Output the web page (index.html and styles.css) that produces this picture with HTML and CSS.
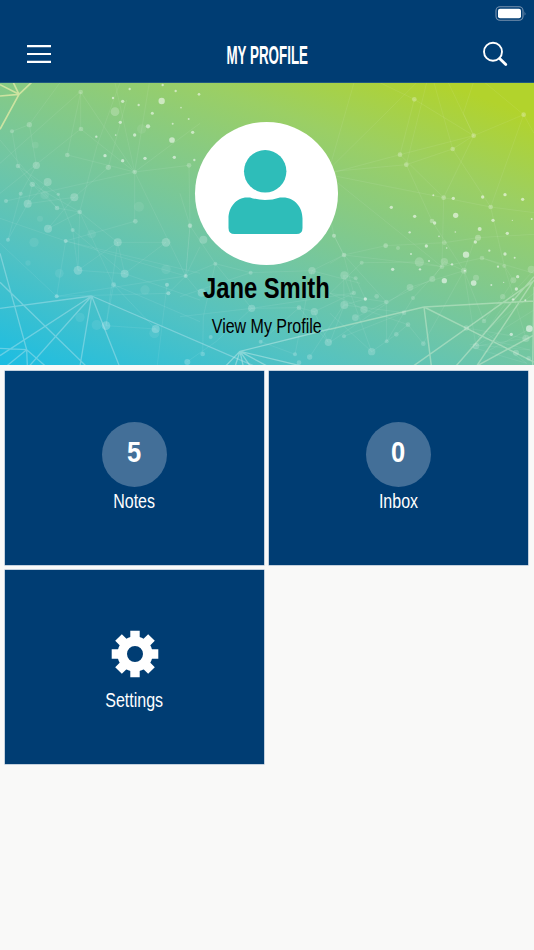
FILE: index.html
```html
<!DOCTYPE html>
<html lang="en">
<head>
    <meta charset="UTF-8">
    <title>My Profile</title>
    <link rel="stylesheet" href="styles.css">
</head>
<body>
    <header class="top_bar">
        <div class="status">
            <svg width="32" height="15" viewBox="0 0 32 15">
                <rect x="1" y=".8" width="27" height="13.4" rx="4" fill="none" stroke="#7893b0" stroke-width="1.1"/>
                <rect x="3" y="2.8" width="23" height="9.4" rx="2" fill="#fff"/>
                <path d="M29.6 5.2q1.6 2.3 0 4.6z" fill="#7893b0"/>
            </svg>
        </div>
        <nav class="nav">
            <svg width="26" height="26" viewBox="0 0 26 26" stroke="#fff" stroke-width="2.2">
                <path d="M1 5.2h24M1 13h24M1 20.8h24"/>
            </svg>
            <h1 class="title"><span>MY PROFILE</span></h1>
            <svg width="26" height="26" viewBox="0 0 26 26" fill="none" stroke="#fff">
                <circle cx="11" cy="10.8" r="9" stroke-width="1.9"/>
                <path d="M17.600 17.400l6.200 6.200" stroke-width="2.800" stroke-linecap="round"/>
            </svg>
        </nav>
    </header>

    <section class="hero">
        <svg class="network" width="534" height="282" viewBox="0 0 534 282">
            <!-- left side -->
            <g transform="translate(0 -3) scale(.33333)" stroke="#fff" fill="none">
                <path stroke-width="2.5" opacity=".09" d="M242 36L202 225L404 276L242 147V36L404 276L345 8M404 276L448 8M404 276L600 130M404 276L567 256L570 437L557 588L404 276V424L197 483L170 649L0 490M88 134L36 154L54 258L97 313L83 371L24 479L62 340L109 256L88 134L180 8M0 340L242 147M18 363L404 276M143 306L83 371L223 352L144 446L239 396L171 384L97 313L239 396L234 571L374 581L218 450L175 343L54 258M353 487L498 487L374 581L353 487L234 571L218 450M353 487L239 396L341 614L600 725M341 614L318 737L353 487M374 581L600 660M0 415L197 483L557 588L170 649L505 640L557 588L600 500M501 614L472 855M341 614L467 747L318 737M0 180L171 384M325 262L223 352M325 262L380 60M239 396L290 200L360 8M197 483L600 580M0 250L240 36M557 588L600 640"/>
                <g stroke="#d9e7a4" stroke-width="5" opacity=".85"><path d="M57 43L0 14M57 43L0 48M57 43L40 8M57 43L94 8M57 43L0 148"/></g>
                <g stroke="#b6e4ee" stroke-width="4" opacity=".45">
                    <path d="M0 520L80 809L136 858M80 809L20 858M80 809L82 858M80 809L0 805M275 648L0 685M275 648L0 827M275 648L88 858M275 648L240 858M275 648L358 858M275 648L765 859M0 607L258 858"/>
                </g>
                <g fill="#fff" stroke="none" opacity=".22">
                    <circle cx="345" cy="95" r="13"/><circle cx="242" cy="36" r="7"/><circle cx="243" cy="147" r="7"/><circle cx="88" cy="134" r="8"/><circle cx="36" cy="154" r="6"/><circle cx="202" cy="225" r="7"/><circle cx="109" cy="256" r="11"/><circle cx="54" cy="258" r="7"/><circle cx="143" cy="306" r="12"/><circle cx="97" cy="313" r="8"/><circle cx="62" cy="341" r="6"/><circle cx="18" cy="363" r="6"/><circle cx="83" cy="371" r="12"/><circle cx="223" cy="352" r="12"/><circle cx="175" cy="343" r="5"/><circle cx="171" cy="384" r="7"/><circle cx="239" cy="396" r="7"/><circle cx="144" cy="446" r="12"/><circle cx="218" cy="450" r="6"/><circle cx="325" cy="262" r="8"/><circle cx="404" cy="276" r="7"/><circle cx="567" cy="256" r="7"/><circle cx="406" cy="424" r="7"/><circle cx="570" cy="437" r="7"/><circle cx="24" cy="479" r="6"/><circle cx="353" cy="487" r="12"/><circle cx="498" cy="487" r="13"/><circle cx="234" cy="571" r="13"/><circle cx="374" cy="581" r="12"/><circle cx="341" cy="614" r="7"/><circle cx="318" cy="737" r="13"/><circle cx="467" cy="747" r="12"/><circle cx="562" cy="846" r="9"/>
                </g>
                <g fill="#fff" stroke="none" opacity=".07">
                    <circle cx="425" cy="147" r="14"/><circle cx="106" cy="195" r="10"/><circle cx="417" cy="380" r="15"/><circle cx="134" cy="345" r="13"/><circle cx="102" cy="487" r="14"/><circle cx="120" cy="416" r="9"/><circle cx="275" cy="462" r="13"/><circle cx="178" cy="580" r="13"/><circle cx="84" cy="549" r="8"/><circle cx="240" cy="712" r="14"/><circle cx="290" cy="735" r="15"/><circle cx="435" cy="630" r="14"/><circle cx="463" cy="760" r="15"/><circle cx="498" cy="568" r="14"/>
                </g>
                <g fill="#fff" stroke="none" opacity=".3">
                    <circle cx="197" cy="483" r="6"/><circle cx="170" cy="649" r="6"/><circle cx="557" cy="588" r="6"/><circle cx="501" cy="614" r="6"/><circle cx="505" cy="640" r="6"/>
                </g>
                <g fill="#fff" stroke="none" opacity=".55">
                    <circle cx="389" cy="27" r="3.5"/><circle cx="488" cy="15" r="3.5"/><circle cx="527" cy="33" r="3.5"/><circle cx="339" cy="54" r="3.5"/><circle cx="368" cy="64" r="5"/><circle cx="416" cy="75" r="3.5"/><circle cx="485" cy="63" r="9.5"/><circle cx="543" cy="83" r="2.5"/><circle cx="457" cy="100" r="4.5"/><circle cx="361" cy="127" r="5"/><circle cx="444" cy="139" r="6.5"/><circle cx="518" cy="131" r="3"/><circle cx="566" cy="117" r="3"/><circle cx="404" cy="165" r="5"/><circle cx="347" cy="165" r="2.5"/><circle cx="289" cy="170" r="3.5"/><circle cx="516" cy="180" r="8.5"/><circle cx="578" cy="157" r="5"/><circle cx="315" cy="227" r="5"/><circle cx="368" cy="242" r="5"/><circle cx="435" cy="235" r="5"/><circle cx="523" cy="232" r="5"/><circle cx="583" cy="240" r="3.5"/><circle cx="597" cy="43" r="4"/>
                </g>
            </g>

            <!-- middle, below the avatar -->
            <g transform="translate(180 27) scale(.33333)" stroke="#fff" fill="none">
                <path stroke-width="2.5" opacity=".09" d="M17 498L106 461L212 488L396 482L491 435L462 377M17 498L30 347L106 461L215 595L357 593L403 605L521 549L491 435M106 461L70 620L68 732M215 595L109 694L22 755M396 482L345 733L242 695L357 593L445 697L403 605M212 488L0 560M0 620L215 595L521 549M396 482L540 520M491 496L492 584L389 741M30 347L0 250"/>
                <g stroke="#c3ece9" stroke-width="4" opacity=".5"><path d="M180 724L135 770M180 724L165 770M180 724L190 770M180 724L212 770M180 724L265 770M180 724L365 768M180 724L450 657"/></g>
                <g fill="#fff" stroke="none" opacity=".2">
                    <circle cx="70" cy="389" r="12"/><circle cx="30" cy="347" r="6"/><circle cx="106" cy="461" r="6"/><circle cx="212" cy="488" r="6"/><circle cx="462" cy="377" r="6"/><circle cx="396" cy="482" r="11"/><circle cx="65" cy="548" r="12"/><circle cx="215" cy="595" r="11"/><circle cx="357" cy="593" r="7"/><circle cx="403" cy="605" r="11"/><circle cx="92" cy="681" r="6"/><circle cx="242" cy="695" r="6"/><circle cx="445" cy="697" r="11"/><circle cx="68" cy="732" r="7"/><circle cx="389" cy="741" r="8"/><circle cx="345" cy="733" r="6"/><circle cx="357" cy="758" r="7"/>
                </g>
            </g>

            <!-- right side -->
            <g transform="translate(330 -3) scale(.33333)" stroke="#fff" fill="none">
                <path stroke-width="2.5" opacity=".09" d="M0 260L72 8M0 265L260 8M0 280L210 224L253 58L431 167L210 224M0 275L229 254L290 8M0 285L341 353L482 381L612 398M0 290L336 560M210 224L341 353L431 167L581 104L482 381L368 207L229 254L306 423L402 572M431 167L368 207M253 58L150 8M431 167L355 8M368 207L312 8M400 100L430 8M400 100L431 167M581 104L465 8M581 104L612 160M341 353L336 560L456 534L612 580M444 473L612 463M444 473L343 488L167 497L42 525L336 560L268 546L95 548L0 640M42 525L12 467L0 410M0 550L42 525L169 666L0 640L102 688L234 734L280 791M0 787L240 622L402 572L434 480M76 713L307 597L343 545L402 572L438 798L543 645L612 570M42 769L222 698L249 654L336 560M125 815L199 763L234 734M43 586L77 595L106 657L43 675L0 787M280 791L402 572L462 723L518 650L550 601L523 558L456 534M409 744L588 775L438 798L612 690M419 793L600 810L444 770L612 640M42 586L125 815L0 700M169 666L170 784L222 698L43 675M460 820L612 740M470 760L590 850L420 800M482 381L523 558L588 775"/>
                <g stroke="#cdebcf" stroke-width="4.5" opacity=".5">
                    <path d="M282 681L0 748M282 681L612 663M282 681L304 858M282 681L612 846M612 602L250 858M612 590L378 858M612 600L440 858M612 765L440 858M612 620L608 858"/>
                </g>
                <g fill="#fff" stroke="none" opacity=".27">
                    <circle cx="253" cy="58" r="7"/><circle cx="581" cy="104" r="7"/><circle cx="431" cy="167" r="7"/><circle cx="368" cy="207" r="7"/><circle cx="210" cy="224" r="7"/><circle cx="229" cy="254" r="7"/><circle cx="341" cy="353" r="7"/><circle cx="482" cy="381" r="7"/><circle cx="306" cy="423" r="7"/><circle cx="444" cy="473" r="9"/><circle cx="42" cy="525" r="7"/><circle cx="167" cy="497" r="7"/>
                </g>
                <g fill="#fff" stroke="none" opacity=".18">
                    <circle cx="12" cy="467" r="6"/><circle cx="204" cy="504" r="6"/><circle cx="343" cy="488" r="7"/><circle cx="456" cy="534" r="7"/><circle cx="268" cy="546" r="14"/><circle cx="343" cy="545" r="11"/><circle cx="336" cy="560" r="7"/><circle cx="95" cy="548" r="6"/><circle cx="43" cy="586" r="12"/><circle cx="77" cy="595" r="6"/><circle cx="307" cy="597" r="9"/><circle cx="240" cy="622" r="10"/><circle cx="402" cy="572" r="9"/><circle cx="438" cy="593" r="9"/><circle cx="523" cy="558" r="6"/><circle cx="550" cy="601" r="9"/><circle cx="604" cy="568" r="11"/><circle cx="518" cy="650" r="8"/><circle cx="71" cy="639" r="7"/><circle cx="140" cy="649" r="7"/><circle cx="249" cy="654" r="6"/><circle cx="169" cy="666" r="7"/><circle cx="43" cy="675" r="12"/><circle cx="102" cy="688" r="11"/><circle cx="76" cy="713" r="10"/><circle cx="222" cy="698" r="7"/><circle cx="234" cy="734" r="7"/><circle cx="199" cy="763" r="7"/><circle cx="170" cy="784" r="6"/><circle cx="280" cy="791" r="7"/><circle cx="125" cy="815" r="11"/><circle cx="42" cy="769" r="6"/><circle cx="462" cy="723" r="7"/><circle cx="409" cy="744" r="8"/><circle cx="438" cy="798" r="10"/><circle cx="588" cy="775" r="11"/><circle cx="558" cy="818" r="9"/><circle cx="596" cy="835" r="7"/>
                </g>
                <g fill="#fff" stroke="none" opacity=".57">
                    <circle cx="184" cy="382" r="5"/><circle cx="310" cy="346" r="3"/><circle cx="370" cy="355" r="5"/><circle cx="458" cy="351" r="5"/><circle cx="525" cy="344" r="5"/><circle cx="578" cy="358" r="5"/><circle cx="254" cy="409" r="5"/><circle cx="377" cy="406" r="8"/><circle cx="314" cy="429" r="5"/><circle cx="489" cy="421" r="5"/><circle cx="547" cy="421" r="2"/><circle cx="605" cy="417" r="3"/><circle cx="239" cy="457" r="3.5"/><circle cx="449" cy="447" r="6"/><circle cx="376" cy="456" r="2.5"/><circle cx="532" cy="460" r="5"/><circle cx="327" cy="469" r="2.5"/><circle cx="289" cy="498" r="5"/><circle cx="436" cy="486" r="5"/><circle cx="350" cy="504" r="2.5"/><circle cx="478" cy="512" r="3.5"/><circle cx="243" cy="522" r="3"/><circle cx="408" cy="524" r="9.5"/><circle cx="525" cy="522" r="5"/><circle cx="554" cy="533" r="3"/><circle cx="297" cy="543" r="3"/><circle cx="366" cy="553" r="3.5"/><circle cx="188" cy="568" r="5"/><circle cx="270" cy="568" r="3.5"/><circle cx="405" cy="572" r="3"/><circle cx="504" cy="560" r="3.5"/><circle cx="563" cy="590" r="5"/><circle cx="343" cy="602" r="8"/><circle cx="431" cy="609" r="8.5"/><circle cx="484" cy="615" r="3"/><circle cx="521" cy="607" r="2"/><circle cx="559" cy="627" r="5"/><circle cx="549" cy="658" r="3.5"/><circle cx="586" cy="661" r="3"/><circle cx="106" cy="657" r="5"/><circle cx="598" cy="746" r="10"/><circle cx="544" cy="763" r="5"/>
                </g>
            </g>
        </svg>
        <div class="avatar">
            <svg width="143" height="143" viewBox="0 0 143 143" fill="#2ebdb9">
                <circle cx="70.2" cy="49.3" r="21.2"/>
                <path d="M52 75.4h3q15 5 30 0h3c12 0 19.500 10 19.500 21v9.500q0 6-6 6H39.500q-6 0-6-6v-9.500c0-11 7.500-21 18.500-21z"/>
            </svg>
        </div>
        <h2 class="name"><span>Jane Smith</span></h2>
        <p class="view"><span>View My Profile</span></p>
    </section>

    <main class="tiles">
        <div class="tile">
            <div class="count"><span>5</span></div>
            <div class="label"><span>Notes</span></div>
        </div>
        <div class="tile">
            <div class="count"><span>0</span></div>
            <div class="label"><span>Inbox</span></div>
        </div>
        <div class="tile">
            <div class="gear">
                <svg width="48" height="48" viewBox="-24 -24 48 48" fill="#fff">
                    <circle r="12.8" fill="none" stroke="#fff" stroke-width="9.6"/>
                    <path id="tooth" d="M-4.700-23.300h9.400v8h-9.400zM-4.700 15.300h9.400v8h-9.400z"/>
                    <use href="#tooth" transform="rotate(45)"/>
                    <use href="#tooth" transform="rotate(90)"/>
                    <use href="#tooth" transform="rotate(135)"/>
                </svg>
            </div>
            <div class="label"><span>Settings</span></div>
        </div>
    </main>
</body>
</html>
```
FILE: styles.css
```css
/*tag*/
*{
    box-sizing: border-box;
}
body{
    margin: 0;
    min-height: 950px;
    background: #f9f9f8;
    font-family: "Liberation Sans", Arial, sans-serif;
}
h1, h2, p{
    margin: 0;
}
svg{
    display: block;
}
span{
    display: inline-block;
    white-space: nowrap;
}


/*header*/
.top_bar{
    height: 83px;
    background: #003d73;
    border-bottom: 1px solid #1f5880;
}
.status{
    display: flex;
    justify-content: flex-end;
    padding: 6px 7px 0 0;
}
.nav{
    display: flex;
    justify-content: space-between;
    align-items: center;
    padding: 0 26px;
    margin-top: 17px;
    height: 32px;
}
.title{
    padding-top: 2px;
    color: #fff;
    font-size: 26px;
    line-height: 32px;
}
.title span{
    transform: scaleX(.515);
}


/*profile*/
.hero{
    position: relative;
    height: 282px;
    padding: 39px 1px 0 0;
    display: flex;
    flex-direction: column;
    align-items: center;
    background: linear-gradient(21deg, #1cbde2, #53c2c2 25%, #70c6a5 42%, #86ca85 58%, #9bcf64 74%, #b2d32c 93%);
    overflow: hidden;
}
.network{
    position: absolute;
    top: 0;
    left: 0;
}
.avatar{
    position: relative;
    width: 143px;
    height: 143px;
    border-radius: 50%;
    background: #fff;
}
.name{
    position: relative;
    margin-top: 6px;
    font-size: 29px;
    line-height: 34px;
}
.name span{
    transform: scaleX(.82);
}
.view{
    position: relative;
    margin-top: 9px;
    font-size: 20px;
    line-height: 24px;
}
.view span{
    transform: scaleX(.8);
}


/*tiles*/
.tiles{
    display: grid;
    grid-template-columns: 1fr 1fr;
    grid-auto-rows: 194px;
    gap: 5px;
    padding: 6px 6px 6px 5px;
}
.tile{
    display: flex;
    flex-direction: column;
    align-items: center;
    padding-top: 51px;
    background: #003d73;
    box-shadow: 0 0 0 .5px #8fa9c4;
    color: #fff;
}
.count{
    width: 65px;
    height: 65px;
    border-radius: 50%;
    background: #436f98;
    text-align: center;
    font-size: 29px;
    font-weight: bold;
    line-height: 60px;
}
.count span{
    transform: scaleX(.88);
}
.gear{
    height: 65px;
    padding-top: 8.500px;
}
.label{
    margin-top: 2px;
    font-size: 20px;
    line-height: 24px;
}
.label span{
    transform: scaleX(.8);
}
```
